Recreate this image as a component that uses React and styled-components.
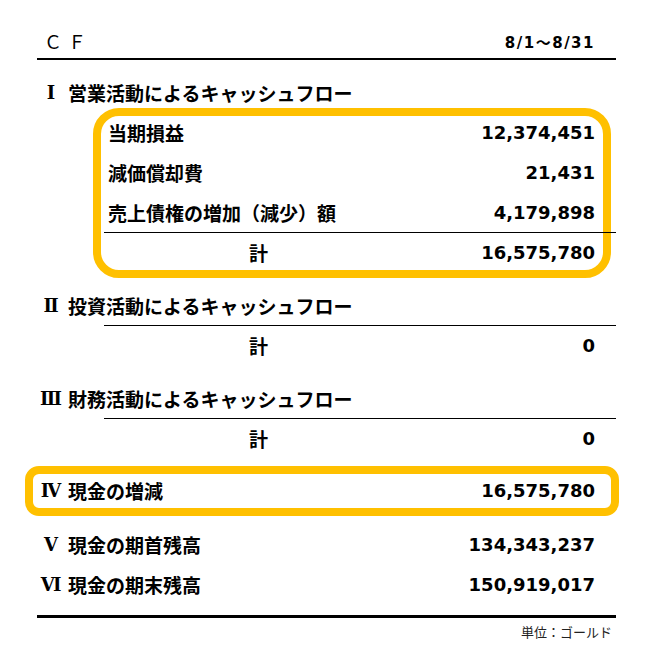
import React from 'react';
import styled, { createGlobalStyle, css } from 'styled-components';

const GlobalStyle = createGlobalStyle`
    body {
        margin: 0;
        background: #fff;
        color: #000;
        font-family: "Noto Sans CJK JP", sans-serif;
    }
`

const Sheet = styled.div`
    width: 579px;
    margin-left: 37px;
`

const Header = styled.div`
    display: flex;
    justify-content: space-between;
    align-items: flex-end;
    height: 58px;
    padding: 0 21px 6px 7px;
    box-sizing: border-box;
`

const Title = styled.div`
    font-size: 18px;
    line-height: 22px;
    letter-spacing: 6px;
`

const DateRange = styled.div`
    font-family: "DejaVu Sans", "Noto Sans CJK JP", sans-serif;
    font-weight: bold;
    font-size: 15px;
    line-height: 20px;
    letter-spacing: 1.5px;
    margin-bottom: -1px;
`

const Rule = styled.div`
    height: ${props => props.$weight}px;
    background: #000;
`

const Sections = styled.div`
    display: flex;
    flex-direction: column;
    gap: 14px;
    padding-top: 12px;
`

const HeadRow = styled.div`
    display: flex;
    align-items: center;
    height: 40px;
    padding-right: 21px;
    font-weight: bold;
    font-size: 19px;
`

const Numeral = styled.span`
    width: 22px;
    margin-left: 3px;
    text-align: center;
    font-family: "DejaVu Serif", "Noto Sans CJK JP", serif;
    font-size: 18px;
`

const HeadText = styled.span`
    margin-left: 6px;
`

// orange rounded frame drawn over the content, under the thin rules
const frame = css`
    position: relative;
    &::before {
        content: '';
        position: absolute;
        top: ${props => props.$top}px;
        left: ${props => props.$left}px;
        right: ${props => props.$right}px;
        bottom: ${props => props.$bottom}px;
        border: 8px solid #FFC000;
        border-radius: ${props => props.$radius}px;
        pointer-events: none;
    }
`

const Detail = styled.div`
    margin-left: 67px;
    ${props => props.$highlight && frame}
`

const Highlight = styled.div`
    ${frame}
`

const Row = styled.div`
    display: flex;
    justify-content: space-between;
    align-items: center;
    height: ${props => props.$total ? 38 : 40}px;
    padding: 0 21px 0 ${props => props.$total ? 145 : 4}px;
`

const Label = styled.span`
    font-weight: bold;
    font-size: 19px;
`

const Value = styled.span`
    font-family: "DejaVu Sans", sans-serif;
    font-weight: bold;
    font-size: 18px;
    margin-left: auto;
`

const SubRule = styled.div`
    position: relative;
    z-index: 1;
    height: 1px;
    background: #000;
`

const Summary = styled.div`
    margin-top: 13px;
`

const Balances = styled.div`
    margin-top: 14px;
    margin-bottom: 11px;
`

const Unit = styled.div`
    margin-top: 5px;
    padding-right: 4px;
    text-align: right;
    font-size: 13px;
    line-height: 18px;
    color: #222;
`

const sections = [
    {
        numeral: 'Ⅰ',
        title: '営業活動によるキャッシュフロー',
        items: [
            { label: '当期損益', value: '12,374,451' },
            { label: '減価償却費', value: '21,431' },
            { label: '売上債権の増加（減少）額', value: '4,179,898' },
        ],
        total: '16,575,780',
        highlight: true,
    },
    { numeral: 'Ⅱ', title: '投資活動によるキャッシュフロー', items: [], total: '0' },
    { numeral: 'Ⅲ', title: '財務活動によるキャッシュフロー', items: [], total: '0' },
]

const HeadLine = ({ numeral, children, value }) => (
    <HeadRow>
        <Numeral>{numeral}</Numeral>
        <HeadText>{children}</HeadText>
        {value && <Value>{value}</Value>}
    </HeadRow>
)

const SectionDetail = ({ items, total, highlight }) => (
    <Detail $highlight={highlight} $top={-4} $left={-11} $right={5} $bottom={-7} $radius={26}>
        {items.map(item => (
            <Row key={item.label}>
                <Label>{item.label}</Label>
                <Value>{item.value}</Value>
            </Row>
        ))}
        <SubRule />
        <Row $total>
            <Label>計</Label>
            <Value>{total}</Value>
        </Row>
    </Detail>
)

const App = () => (
    <>
        <GlobalStyle />
        <Sheet>
            <Header>
                <Title>ＣＦ</Title>
                <DateRange>8/1～8/31</DateRange>
            </Header>
            <Rule $weight={2} />
            <Sections>
                {sections.map(section => (
                    <div key={section.numeral}>
                        <HeadLine numeral={section.numeral}>{section.title}</HeadLine>
                        <SectionDetail items={section.items} total={section.total} highlight={section.highlight} />
                    </div>
                ))}
            </Sections>
            <Summary>
                <Highlight $top={-4} $left={-12} $right={-3} $bottom={-6} $radius={14}>
                    <HeadLine numeral="Ⅳ" value="16,575,780">現金の増減</HeadLine>
                </Highlight>
            </Summary>
            <Balances>
                <HeadLine numeral="Ⅴ" value="134,343,237">現金の期首残高</HeadLine>
                <HeadLine numeral="Ⅵ" value="150,919,017">現金の期末残高</HeadLine>
            </Balances>
            <Rule $weight={3} />
            <Unit>単位：ゴールド</Unit>
        </Sheet>
    </>
)

export default App;
